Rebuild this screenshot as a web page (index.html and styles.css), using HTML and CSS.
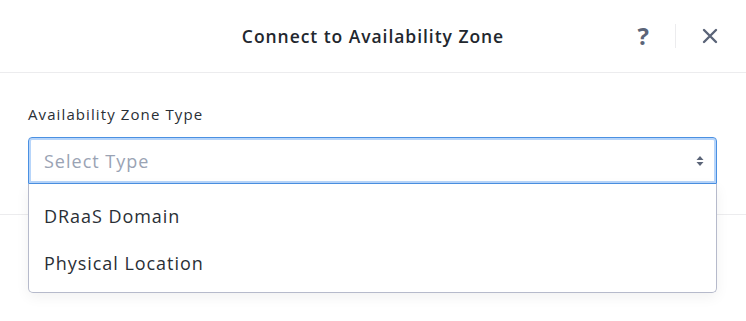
FILE: index.html
```html
<!DOCTYPE html>
<html>
<head>
<meta charset="utf-8">
<link rel="stylesheet" href="styles.css">
</head>
<body>
<div class="modal">
  <div class="modal-header">
    <div class="spacer"></div>
    <div class="title">Connect to Availability Zone</div>
    <div class="actions">
      <span class="help">?</span>
      <span class="sep"></span>
      <svg class="close" width="16" height="16" viewBox="0 0 16 16"><path d="M2 2L14 14M14 2L2 14" stroke="#5b6478" stroke-width="2.4" stroke-linecap="round" fill="none"/></svg>
    </div>
  </div>
  <div class="modal-body">
    <div class="label">Availability Zone Type</div>
    <div class="select-wrap">
      <div class="select">
        <span class="placeholder">Select Type</span>
        <svg class="arrows" width="8" height="12" viewBox="0 0 8 12"><path d="M4 1L7.5 5H0.5Z M4 11L0.5 7H7.5Z" fill="#5b6478"/></svg>
      </div>
      <div class="menu">
        <div class="item">DRaaS Domain</div>
        <div class="item">Physical Location</div>
      </div>
    </div>
  </div>
  <div class="modal-footer"></div>
</div>
</body>
</html>
```
FILE: styles.css
```css
html, body {
  margin: 0;
  padding: 0;
  background: #ffffff;
  font-family: "Open Sans", "Lato", sans-serif;
  color: #22272e;
}
.modal {
  width: 746px;
  height: 321px;
  overflow: hidden;
}
.modal-header {
  height: 72px;
  border-bottom: 1px solid #ececee;
  display: grid;
  grid-template-columns: 1fr auto 1fr;
  align-items: center;
}
.title {
  font-size: 17.5px;
  font-weight: 600;
  color: #22272e;
  letter-spacing: 0.95px;
}
.actions {
  display: flex;
  align-items: center;
  justify-content: flex-end;
  padding-right: 28px;
}
.help {
  font-size: 24px;
  font-weight: 700;
  color: #5b6478;
  line-height: 24px;
}
.sep {
  width: 1px;
  height: 24px;
  background: #ececee;
  margin: 0 26px 0 26px;
}
.close {
  display: block;
}
.modal-body {
  padding: 31px 29px 30px 28px;
  border-bottom: 1px solid #ececee;
}
.label {
  font-size: 15px;
  line-height: 20px;
  color: #2a2f36;
  margin-bottom: 13px;
  letter-spacing: 1.1px;
}
.select-wrap {
  position: relative;
}
.select {
  height: 47px;
  box-sizing: border-box;
  border: 1px solid #4a90e2;
  box-shadow: inset 0 0 0 2px #b7d5fa;
  border-radius: 4px 4px 0 0;
  display: flex;
  align-items: center;
  justify-content: space-between;
  padding: 0 12px 0 15px;
}
.placeholder {
  font-size: 18px;
  color: #9aa3b4;
  letter-spacing: 1px;
}
.arrows {
  display: block;
}
.menu {
  position: absolute;
  left: 0;
  right: 0;
  top: 47px;
  box-sizing: border-box;
  height: 109px;
  background: #ffffff;
  border: 1px solid #b6bacb;
  border-top: none;
  border-radius: 0 0 5px 5px;
  box-shadow: 0 4px 14px rgba(0, 0, 0, 0.06);
  padding-top: 8px;
}
.item {
  height: 47px;
  display: flex;
  align-items: center;
  padding-left: 15px;
  font-size: 18px;
  color: #2a2f36;
  letter-spacing: 0.95px;
}
```
